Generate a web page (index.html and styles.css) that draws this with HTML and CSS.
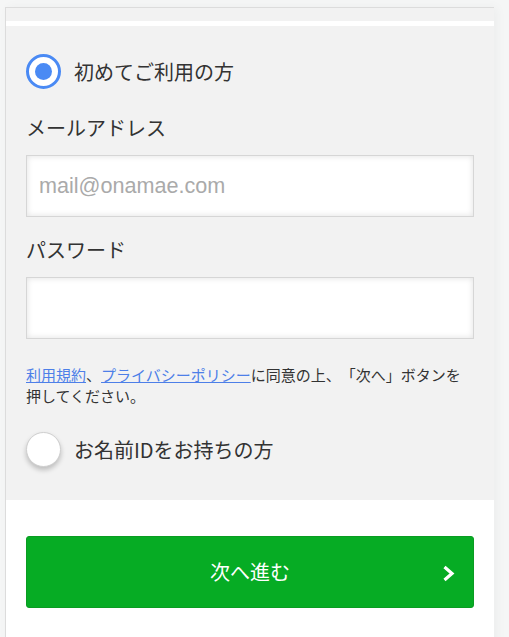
FILE: index.html
```html
<!DOCTYPE html>
<html lang="ja">
<head>
<meta charset="utf-8">
<title>ログイン</title>
<link rel="stylesheet" href="styles.css">
</head>
<body>
<div class="card">
  <div class="top-band"></div>
  <div class="stripe"></div>
  <section class="form-area">
    <div class="radio-row">
      <span class="radio radio-on"><span class="dot"></span></span>
      <span class="radio-label">初めてご利用の方</span>
    </div>
    <div class="field-label first">メールアドレス</div>
    <div class="input"><span class="placeholder">mail@onamae.com</span></div>
    <div class="field-label">パスワード</div>
    <div class="input"></div>
    <p class="terms"><a href="#">利用規約</a>、<a href="#">プライバシーポリシー</a>に同意の上、「次へ」ボタンを<br>押してください。</p>
    <div class="radio-row second">
      <span class="radio radio-off"></span>
      <span class="radio-label">お名前IDをお持ちの方</span>
    </div>
  </section>
  <section class="action-area">
    <button class="next-btn" type="button">
      <span class="spacer"></span>
      <span class="btn-text">次へ進む</span>
      <svg class="chev" width="13" height="17" viewBox="0 0 13 17"><polyline points="2.5,2 10,8.5 2.5,15" fill="none" stroke="#fff" stroke-width="3.2" stroke-linejoin="miter" stroke-linecap="butt"/></svg>
    </button>
  </section>
</div>
</body>
</html>
```
FILE: styles.css
```css
* { box-sizing: border-box; }
html, body { margin: 0; padding: 0; }
body {
  background: #f5f6f6;
  font-family: "Noto Sans CJK JP", "Noto Sans", sans-serif;
  color: #333;
  padding: 7px 0 0 5px;
  height: 637px;
  overflow: hidden;
  text-spacing-trim: space-all;
}
.card {
  width: 489px;
  background: #f2f2f2;
  border-top: 1px solid #dcdcdc;
  border-left: 1px solid #dcdcdc;
  box-shadow: 3px 0 10px rgba(0,0,0,0.04);
  min-height: 640px;
}
.top-band { height: 13px; background: #f2f2f2; }
.stripe { height: 5px; background: #fff; }
.form-area {
  background: #f2f2f2;
  padding: 28px 20px 33px 20px;
}
.radio-row {
  display: flex;
  align-items: center;
  gap: 13px;
  height: 35px;
}
.radio-row.second { margin-top: 26px; }
.radio {
  width: 35px;
  height: 35px;
  border-radius: 50%;
  background: #fff;
  flex: none;
  display: flex;
  align-items: center;
  justify-content: center;
}
.radio-on { border: 3px solid #4a8af4; }
.radio-on .dot {
  width: 17px;
  height: 17px;
  border-radius: 50%;
  background: #4a8af4;
}
.radio-off {
  border: 1px solid #cfcfcf;
  box-shadow: 0 3px 5px rgba(0,0,0,0.22);
}
.radio-label {
  font-size: 20px;
  line-height: 28px;
  color: #333;
}
.field-label {
  font-size: 20px;
  line-height: 28px;
  margin-top: 19px;
  color: #333;
}
.field-label.first { margin-top: 25px; }
.input {
  margin-top: 13px;
  height: 62px;
  background: #fff;
  border: 1px solid #d6d6d6;
  box-shadow: inset 0 0 6px rgba(0,0,0,0.12);
  display: flex;
  align-items: center;
  padding-left: 12px;
}
.placeholder {
  font-family: "Liberation Sans", Arial, sans-serif;
  font-size: 21.6px;
  color: #aaa;
}
.terms {
  margin: 25px 0 0 0;
  font-size: 15px;
  line-height: 21px;
  color: #333;
}
.terms a { color: #4d7fe8; text-decoration: underline; }
.action-area {
  background: #fff;
  padding: 36px 20px 40px 20px;
}
.next-btn {
  width: 100%;
  height: 72px;
  background: #06ac24;
  border: 1px solid #0a9c22;
  border-radius: 3px;
  display: grid;
  grid-template-columns: 1fr auto 1fr;
  align-items: center;
  padding: 0 18px;
  font-family: "Noto Sans CJK JP", "Noto Sans", sans-serif;
  color: #fff;
  cursor: pointer;
}
.btn-text { font-size: 20px; line-height: 28px; }
.chev { justify-self: end; margin-top: 2px; }
```
